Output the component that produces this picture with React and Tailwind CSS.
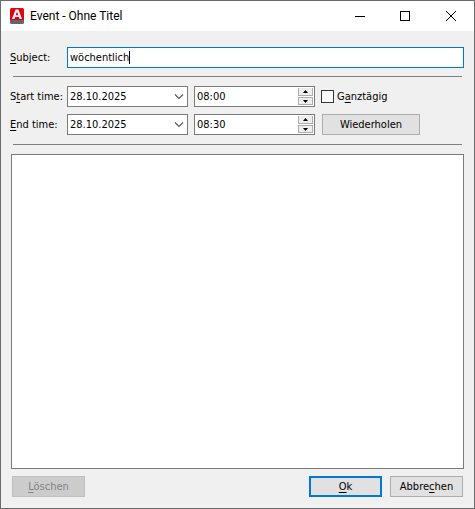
import React, { useState } from 'react';

const fieldClass =
  "h-[21px] border border-[#7a7a7a] bg-white text-black outline-none";
const buttonClass = "h-[21px] border border-[#adadad] bg-[#e1e1e1] text-center leading-5";

// Underlined access key inside a label
const Key = ({ children }) => (
  <span className="underline decoration-1 underline-offset-2">{children}</span>
);

const AppIcon = () => (
  <svg width="15" height="16" viewBox="0 0 15 16" className="shrink-0" aria-hidden="true">
    <path d="M0 1.5Q0 0 1.5 0H12.5Q14 0 14 1.5V12H0Z" fill="#e3000f" />
    <path d="M0 12H14V14.5Q14 16 12.5 16H1.5Q0 16 0 14.5Z" fill="#666" />
    <path d="M2 11L5.6 1.5H8.4L12 11H9.6L8.9 9H5.1L4.4 11ZM5.7 7.2H8.3L7 3.4Z" fill="#fff" fillRule="evenodd" />
  </svg>
);

const TitleBar = () => (
  <header className="flex h-[30px] shrink-0 items-center bg-white pl-[9px]">
    <AppIcon />
    <h1 className="ml-[5px] flex-1 font-['Roboto',sans-serif] text-[12px] leading-4 font-normal">Event - Ohne Titel</h1>
    <button type="button" aria-label="Minimize" className="flex h-full w-[44px] items-center justify-center">
      <svg width="10" height="10" shapeRendering="crispEdges">
        <path d="M0 5.5H10" stroke="#000" />
      </svg>
    </button>
    <button type="button" aria-label="Maximize" className="flex h-full w-[46px] items-center justify-center">
      <svg width="10" height="10" shapeRendering="crispEdges">
        <path d="M.5 .5H9.5V9.5H.5Z" fill="none" stroke="#000" />
      </svg>
    </button>
    <button type="button" aria-label="Close" className="flex h-full w-[46px] items-center justify-center">
      <svg width="10" height="10">
        <path d="M0 0L10 10M10 0L0 10" stroke="#000" />
      </svg>
    </button>
  </header>
);

const DateSelect = ({ id }) => (
  <div className="relative">
    <select id={id} className={`${fieldClass} block w-full appearance-none pl-[2px] leading-5`}>
      <option>28.10.2025</option>
    </select>
    <svg width="10" height="6" className="pointer-events-none absolute top-[8px] right-[4px]">
      <path d="M1 .5L5 4.5L9 .5" fill="none" stroke="#555" strokeWidth="1.1" />
    </svg>
  </div>
);

const TimeSpinner = ({ label, value, onChange }) => {
  // Steps in half hours, wraps around midnight
  const step = (minutes) => {
    const [h, m] = value.split(':').map(Number);
    const total = (h * 60 + m + minutes + 1440) % 1440;
    onChange(`${String(Math.floor(total / 60)).padStart(2, '0')}:${String(total % 60).padStart(2, '0')}`);
  };

  return (
    <div className={`${fieldClass} flex pr-px`}>
      <input
        aria-label={label}
        value={value}
        onChange={(e) => onChange(e.target.value)}
        className="w-0 flex-1 pl-[2px] leading-5 outline-none"
      />
      <div className="flex w-[15px] flex-col gap-px py-px">
        <button
          type="button"
          aria-label={`${label} up`}
          onClick={() => step(30)}
          className="flex h-[8px] items-center justify-center border border-t-0 border-[#adadad] bg-[#eee]"
        >
          <svg width="5" height="3"><path d="M0 3L2.5 0L5 3Z" /></svg>
        </button>
        <button
          type="button"
          aria-label={`${label} down`}
          onClick={() => step(-30)}
          className="flex h-[8px] items-center justify-center border border-[#adadad] bg-[#eee]"
        >
          <svg width="5" height="3"><path d="M0 0L2.5 3L5 0Z" /></svg>
        </button>
      </div>
    </div>
  );
};

export default function App() {
  const [subject, setSubject] = useState('wöchentlich');
  const [start, setStart] = useState('08:00');
  const [end, setEnd] = useState('08:30');
  const [allDay, setAllDay] = useState(false);
  const [notes, setNotes] = useState('');

  return (
    <div className="flex min-h-screen flex-col border border-[#6b6b6b] bg-[#f0f0f0] font-['DejaVu_Sans_Condensed','DejaVu_Sans',sans-serif] text-[11px] text-black">
      <TitleBar />
      <form className="flex flex-1 flex-col px-[10px] pb-[11px]" onSubmit={(e) => e.preventDefault()}>
        <div className="mt-4 flex">
          <label htmlFor="subject" className="-ml-px mr-px w-[56px] shrink-0 leading-[22px] h-[21px] whitespace-nowrap">
            <Key>S</Key>ubject:
          </label>
          <div className="flex h-[21px] flex-1 items-center border border-[#0078d7] bg-white pl-[2px]">
            <input
              id="subject"
              value={subject}
              onChange={(e) => setSubject(e.target.value)}
              className="field-sizing-content leading-5 outline-none"
            />
            <span className="h-[13px] w-px bg-black" />
          </div>
        </div>

        <hr className="mx-[2px] mt-2 border-[#808080]" />

        <div className="mt-[9px] grid grid-cols-[56px_1fr_149px] gap-y-[7px]">
          <label htmlFor="start-date" className="-ml-px h-[21px] leading-[22px] whitespace-nowrap">
            S<Key>t</Key>art time:
          </label>
          <div className="grid grid-cols-2 gap-[6px]">
            <DateSelect id="start-date" />
            <TimeSpinner label="Start" value={start} onChange={setStart} />
          </div>
          <label className="ml-[6px] flex h-[21px] items-center gap-[3px] leading-[22px]">
            <input
              type="checkbox"
              checked={allDay}
              onChange={(e) => setAllDay(e.target.checked)}
              className="size-[13px] appearance-none border border-[#333] bg-white checked:bg-[#0078d7]"
            />
            <span>G<Key>a</Key>nztägig</span>
          </label>

          <label htmlFor="end-date" className="-ml-px h-[21px] leading-[22px] whitespace-nowrap">
            <Key>E</Key>nd time:
          </label>
          <div className="grid grid-cols-2 gap-[6px]">
            <DateSelect id="end-date" />
            <TimeSpinner label="End" value={end} onChange={setEnd} />
          </div>
          <button type="button" className={`${buttonClass} ml-[7px] w-[98px]`}>
            Wiederholen
          </button>
        </div>

        <hr className="mx-[2px] mt-[9px] border-[#808080]" />

        <textarea
          aria-label="Notes"
          value={notes}
          onChange={(e) => setNotes(e.target.value)}
          className="mt-[9px] w-full flex-1 resize-none border border-[#7a7a7a] bg-white p-1 outline-none"
        />

        <div className="mt-[7px] flex gap-2 px-px">
          <button
            type="button"
            disabled
            className="mr-auto h-[21px] w-[73px] border border-[#bfbfbf] bg-[#ccc] leading-5 text-[#838383]"
          >
            <Key>L</Key>öschen
          </button>
          <button type="submit" className="h-[21px] w-[73px] border-2 border-[#0078d7] bg-[#e1e1e1] leading-[18px]">
            <Key>O</Key>k
          </button>
          <button type="button" className={`${buttonClass} w-[73px]`}>
            Abbre<Key>c</Key>hen
          </button>
        </div>
      </form>
    </div>
  );
}
